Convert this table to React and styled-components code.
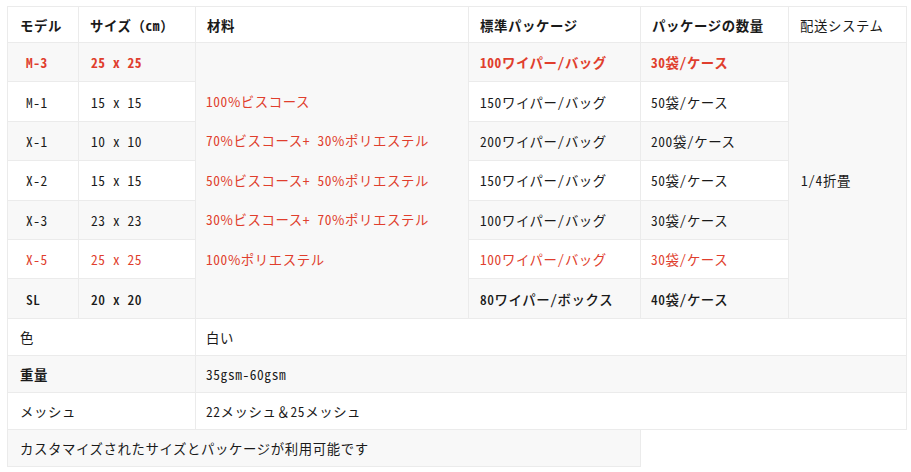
import React from "react"
import styled, { createGlobalStyle } from "styled-components"

const GlobalStyle = createGlobalStyle`
  body {
    margin: 0;
    background: #ffffff;
    font-family: "Noto Sans CJK JP", "Liberation Sans", sans-serif;
  }
`

const Page = styled.div`
  padding: 6px 0 0 7px;
`

const Table = styled.table`
  border-collapse: collapse;
  table-layout: fixed;
  width: 899px;
  font-size: 13.4px;
  letter-spacing: 0.6px;
  font-feature-settings: "hwid" 1;
  color: #1a1a1a;
`

const Row = styled.tr`
  height: ${p => p.$h || 37}px;
  background: ${p => (p.$shade ? "#f8f8f8" : "#ffffff")};
`

const Cell = styled.td`
  border: 1px solid #ebebeb;
  padding: 0 0 0 ${p => p.$pad || 11}px;
  vertical-align: middle;
  white-space: nowrap;
  color: ${p => (p.$red ? "#e03e2d" : "inherit")};
  font-weight: ${p => p.$weight || 400};
  background: ${p => (p.$shade ? "#f8f8f8" : "inherit")};
`

const Lines = styled.div`
  color: #e03e2d;
  line-height: 39.5px;
`

// full-width / proportional marks keep their own width
const Wide = styled.span`
  font-feature-settings: normal;
`

const fmt = text =>
  text.split(/([%（）＆])/).map((part, i) =>
    /^[%（）＆]$/.test(part) ? <Wide key={i}>{part}</Wide> : part
  )

const models = [
  { m: "M-3", s: "25 x 25", p: "100ワイパー/バッグ", q: "30袋/ケース", red: true, weight: 700 },
  { m: "M-1", s: "15 x 15", p: "150ワイパー/バッグ", q: "50袋/ケース" },
  { m: "X-1", s: "10 x 10", p: "200ワイパー/バッグ", q: "200袋/ケース" },
  { m: "X-2", s: "15 x 15", p: "150ワイパー/バッグ", q: "50袋/ケース" },
  { m: "X-3", s: "23 x 23", p: "100ワイパー/バッグ", q: "30袋/ケース" },
  { m: "X-5", s: "25 x 25", p: "100ワイパー/バッグ", q: "30袋/ケース", red: true },
  { m: "SL", s: "20 x 20", p: "80ワイパー/ボックス", q: "40袋/ケース", weight: 500 },
]

const materials = [
  "100%ビスコース",
  "70%ビスコース+ 30%ポリエステル",
  "50%ビスコース+ 50%ポリエステル",
  "30%ビスコース+ 70%ポリエステル",
  "100%ポリエステル",
]

export default function App() {
  return (
    <Page>
      <GlobalStyle />
      <Table>
        <colgroup>
          <col style={{ width: 71 }} />
          <col style={{ width: 117 }} />
          <col style={{ width: 273 }} />
          <col style={{ width: 172 }} />
          <col style={{ width: 148 }} />
          <col style={{ width: 118 }} />
        </colgroup>
        <tbody>
          <Row $h={36}>
            <Cell $weight={700} $pad={12}>モデル</Cell>
            <Cell $weight={700}>{fmt("サイズ（cm）")}</Cell>
            <Cell $weight={700}>材料</Cell>
            <Cell $weight={700}>標準パッケージ</Cell>
            <Cell $weight={700}>パッケージの数量</Cell>
            <Cell>配送システム</Cell>
          </Row>
          {models.map((r, i) => (
            <Row key={r.m} $h={39.4} $shade={i % 2 === 0}>
              <Cell $pad={18} $red={r.red} $weight={r.weight}>{r.m}</Cell>
              <Cell $pad={12} $red={r.red} $weight={r.weight}>{r.s}</Cell>
              {i === 0 && (
                <Cell rowSpan={7} $pad={10} $shade>
                  <Lines>
                    {materials.map(t => (
                      <div key={t}>{fmt(t)}</div>
                    ))}
                  </Lines>
                </Cell>
              )}
              <Cell $red={r.red} $weight={r.weight}>{r.p}</Cell>
              <Cell $pad={10} $red={r.red} $weight={r.weight}>{r.q}</Cell>
              {i === 0 && (
                <Cell rowSpan={7} $pad={12} $shade>1/4折畳</Cell>
              )}
            </Row>
          ))}
          <Row>
            <Cell colSpan={2} $pad={12}>色</Cell>
            <Cell colSpan={4} $pad={10}>白い</Cell>
          </Row>
          <Row $shade>
            <Cell colSpan={2} $pad={12} $weight={700}>重量</Cell>
            <Cell colSpan={4} $pad={10}>35gsm-60gsm</Cell>
          </Row>
          <Row>
            <Cell colSpan={2} $pad={12}>メッシュ</Cell>
            <Cell colSpan={4} $pad={10}>{fmt("22メッシュ＆25メッシュ")}</Cell>
          </Row>
          <Row $shade>
            <Cell colSpan={4} $pad={12}>カスタマイズされたサイズとパッケージが利用可能です</Cell>
          </Row>
        </tbody>
      </Table>
    </Page>
  )
}
